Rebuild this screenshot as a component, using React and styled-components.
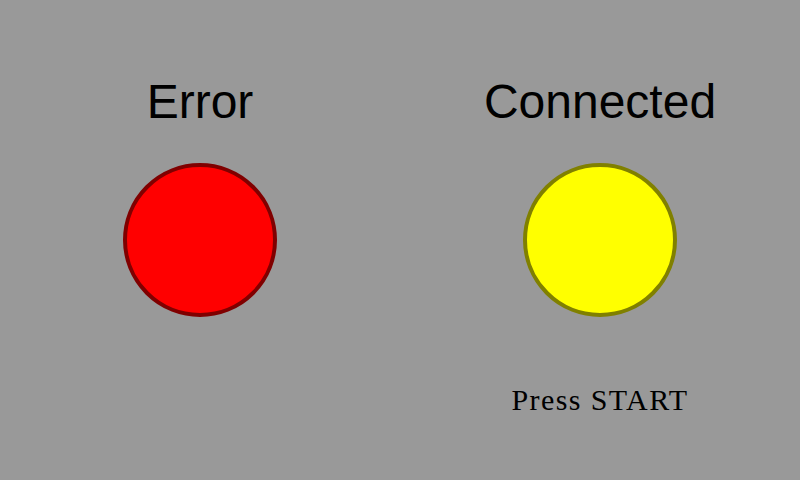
import React from "react";
import styled, { createGlobalStyle } from "styled-components";

const GlobalStyle = createGlobalStyle`
  html, body {
    margin: 0;
    padding: 0;
    background: #999999;
  }
`;

const Screen = styled.div`
  width: 800px;
  height: 480px;
  background: #999999;
  display: grid;
  grid-template-columns: 1fr 1fr;
  overflow: hidden;
`;

const Column = styled.div`
  display: flex;
  flex-direction: column;
  align-items: center;
  padding-top: 78px;
`;

const Title = styled.div`
  font-family: "Liberation Sans", Arial, sans-serif;
  font-size: 48px;
  line-height: 48px;
  color: #000;
`;

const Lamp = styled.div`
  box-sizing: border-box;
  width: 154px;
  height: 154px;
  margin-top: 37px;
  border-radius: 50%;
  background: ${(p) => p.fill};
  border: 4px solid ${(p) => p.edge};
`;

const Hint = styled.div`
  margin-top: 68px;
  font-family: "Liberation Serif", "Times New Roman", serif;
  font-size: 30px;
  line-height: 30px;
  letter-spacing: 1.4px;
  color: #000;
`;

const App = () => {
  return (
    <>
      <GlobalStyle />
      <Screen>
        <Column>
          <Title>Error</Title>
          <Lamp fill="#ff0000" edge="#800000" />
        </Column>
        <Column>
          <Title>Connected</Title>
          <Lamp fill="#ffff00" edge="#808000" />
          <Hint>Press START</Hint>
        </Column>
      </Screen>
    </>
  );
};

export default App;
